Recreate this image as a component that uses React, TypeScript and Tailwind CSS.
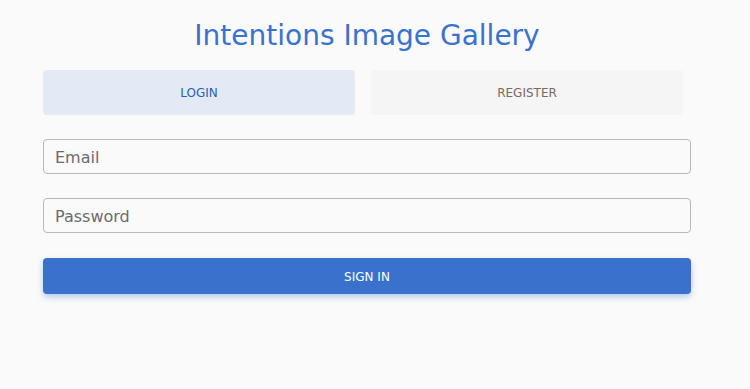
import React from "react";

export default function App() {
  return (
    <div className="min-h-[389px] w-full bg-[#fafafa] font-['DejaVu_Sans',sans-serif]">
      <div className="mx-[43px] w-[648px] pt-[17px]">
        <h1 className="text-center text-[28px] leading-[38px] text-[#3a72cc]">
          Intentions Image Gallery
        </h1>
        <div className="mt-[15px] flex w-[640px] gap-[16px]">
          <button className="h-[45px] flex-1 rounded-[4px] bg-[#e3eaf6] text-[12px] text-[#2a5db3]">
            LOGIN
          </button>
          <button className="h-[45px] flex-1 rounded-[4px] bg-[#f5f5f5] text-[12px] text-[#7a6a60]">
            REGISTER
          </button>
        </div>
        <div className="mt-[24px] flex flex-col gap-[24px]">
          <input
            placeholder="Email"
            className="h-[35px] w-full rounded-[4px] border border-[#b8b8b8] bg-[#fafafa] px-[11px] pt-[2px] text-[16px] text-[#333] outline-none placeholder:text-[#6b6b6b]"
          />
          <input
            placeholder="Password"
            type="password"
            className="h-[35px] w-full rounded-[4px] border border-[#b8b8b8] bg-[#fafafa] px-[11px] pt-[2px] text-[16px] text-[#333] outline-none placeholder:text-[#6b6b6b]"
          />
        </div>
        <button className="mt-[25px] h-[36px] w-full rounded-[4px] bg-[#3a71cc] pt-[2px] text-[12px] text-white shadow-[0_3px_6px_rgba(58,113,204,0.35)]">
          SIGN IN
        </button>
      </div>
    </div>
  );
}
